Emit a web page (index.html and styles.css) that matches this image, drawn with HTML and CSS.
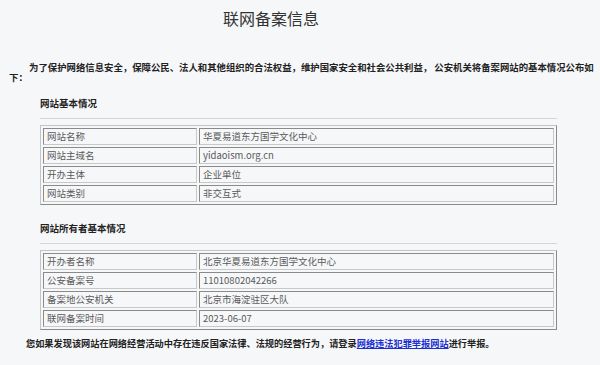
FILE: index.html
```html
<!DOCTYPE html>
<html lang="zh-CN">
<head>
<meta charset="utf-8">
<title>联网备案信息</title>
<link rel="stylesheet" href="styles.css">
</head>
<body>
<div class="page">
  <h1 class="title">联网备案信息</h1>
  <p class="intro">为了保护网络信息安全，保障公民、法人和其他组织的合法权益，维护国家安全和社会公共利益， 公安机关将备案网站的基本情况公布如下：</p>

  <div class="section">
    <h2 class="section-title">网站基本情况</h2>
    <hr class="rule">
    <table class="info">
      <tr><td class="key">网站名称</td><td>华夏易道东方国学文化中心</td></tr>
      <tr><td class="key">网站主域名</td><td>yidaoism.org.cn</td></tr>
      <tr><td class="key">开办主体</td><td>企业单位</td></tr>
      <tr><td class="key">网站类别</td><td>非交互式</td></tr>
    </table>
  </div>

  <div class="section second">
    <h2 class="section-title">网站所有者基本情况</h2>
    <hr class="rule">
    <table class="info">
      <tr><td class="key">开办者名称</td><td>北京华夏易道东方国学文化中心</td></tr>
      <tr><td class="key">公安备案号</td><td>11010802042266</td></tr>
      <tr><td class="key">备案地公安机关</td><td>北京市海淀驻区大队</td></tr>
      <tr><td class="key">联网备案时间</td><td>2023-06-07</td></tr>
    </table>
  </div>

  <p class="footer">您如果发现该网站在网络经营活动中存在违反国家法律、法规的经营行为，请登录<a href="#" class="link">网络违法犯罪举报网站</a>进行举报。</p>
</div>
</body>
</html>
```

FILE: styles.css
```css
html, body {
  margin: 0;
  padding: 0;
  background: #f6f7f9;
}
body {
  font-family: "Noto Sans CJK SC", "Noto Sans", sans-serif;
  color: #333;
}
.page {
  width: 600px;
  height: 365px;
  overflow: hidden;
}
.title {
  margin: 8px 0 0 0;
  padding-right: 58px;
  text-align: center;
  font-size: 16px;
  line-height: 20px;
  font-weight: normal;
  color: #333;
}
.intro {
  margin: 34px 0 0 9px;
  text-indent: 20px;
  font-size: 9.4px;
  line-height: 10px;
  font-weight: bold;
  color: #222;
}
.section {
  margin: 0 0 0 40px;
  width: 517px;
}
.section-title {
  margin: 16px 0 0 0;
  font-size: 9.5px;
  line-height: 10px;
  font-weight: bold;
  color: #222;
}
.second .section-title {
  margin-top: 18px;
}
.rule {
  margin: 10px 0 0 0;
  border: 0;
  border-top: 1px solid #d6d6d6;
  height: 0;
}
.info {
  margin-top: 6px;
  width: 517px;
  border-collapse: separate;
  border-spacing: 2px;
  border: 1px solid;
  border-color: #c4c4c4 #8a8a8a #8a8a8a #c4c4c4;
}
.info td {
  height: 15px;
  padding: 0 0 0 3px;
  border: 1px solid;
  border-color: #8a8a8a #c8c8c8 #c8c8c8 #8a8a8a;
  font-size: 9.5px;
  line-height: 15px;
  color: #5a5a5a;
  vertical-align: middle;
}
.info td.key {
  width: 149px;
}
.footer {
  margin: 8px 0 0 26px;
  font-size: 9.2px;
  line-height: 10px;
  font-weight: bold;
  color: #222;
}
.link {
  color: #1a2fd0;
  text-decoration: underline;
}
```
